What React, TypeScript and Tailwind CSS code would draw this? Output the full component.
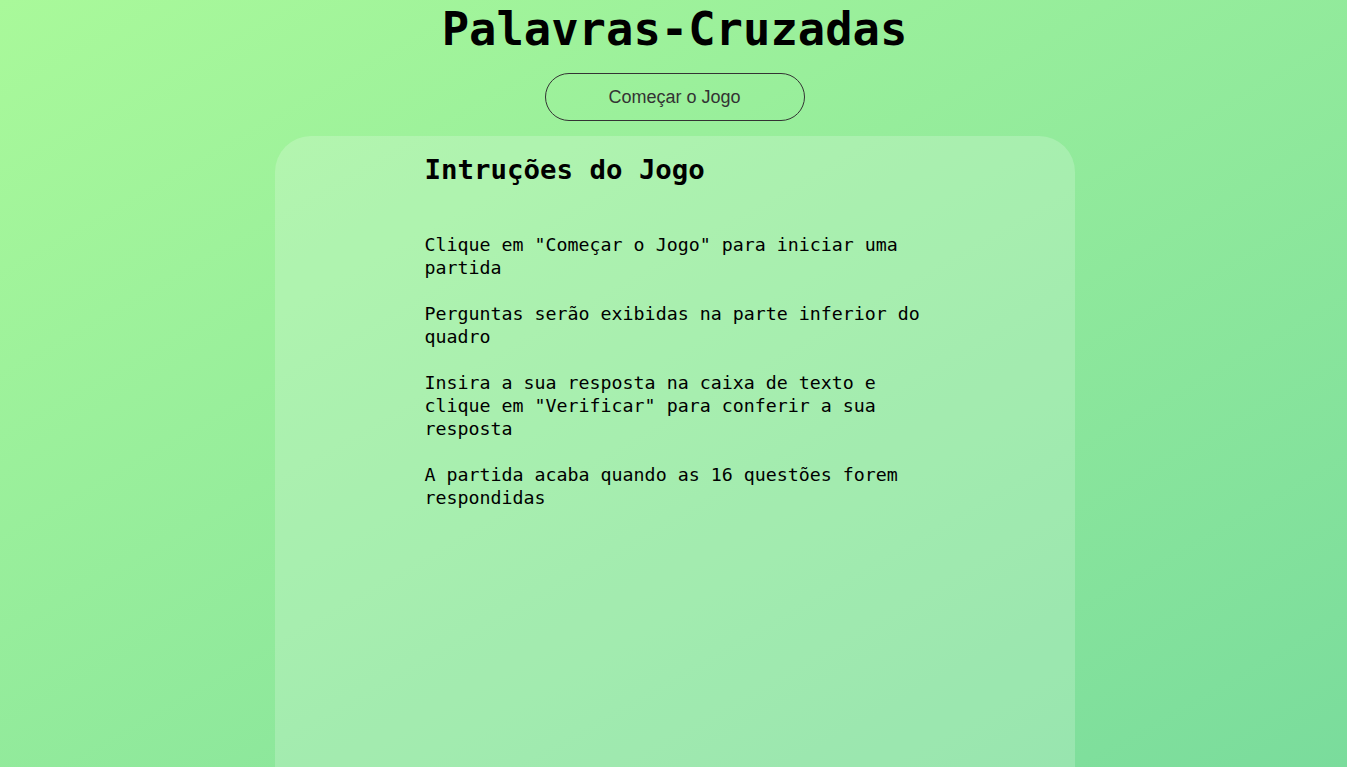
const mono = 'font-["DejaVu_Sans_Mono","Liberation_Mono",monospace]';

const steps = [
  'Clique em "Começar o Jogo" para iniciar uma partida',
  'Perguntas serão exibidas na parte inferior do quadro',
  'Insira a sua resposta na caixa de texto e clique em "Verificar" para conferir a sua resposta',
  'A partida acaba quando as 16 questões forem respondidas',
];

export default function App() {
  return (
    <div className="h-screen overflow-hidden pl-[2px] bg-gradient-to-br from-[#a9f99a] to-[#7adc9c] flex flex-col items-center">
      <h1 className={`${mono} mt-[4px] text-[45.5px] leading-[52px] font-bold text-black`}>
        Palavras-Cruzadas
      </h1>
      <button className='mt-[17px] w-[260px] h-12 min-h-12 shrink-0 rounded-full border border-[#333] text-[18px] leading-[46px] text-[#333] font-["Liberation_Sans",Arial,sans-serif]'>
        Começar o Jogo
      </button>
      <div className="mt-[15px] w-[800px] h-[700px] shrink-0 rounded-[36px] bg-white/20 flex justify-center">
        <div className={`${mono} w-[500px] pt-[16px] text-black`}>
          <h2 className="text-[27.4px] leading-[36px] font-bold">Intruções do Jogo</h2>
          <div className="mt-[45px] flex flex-col gap-[23px] text-[18.3px] leading-[23px]">
            {steps.map((s) => (
              <p key={s}>{s}</p>
            ))}
          </div>
        </div>
      </div>
    </div>
  );
}
